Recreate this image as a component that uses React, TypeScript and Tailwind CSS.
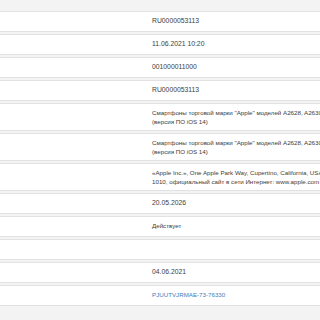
import React from "react";

type Row = { lines: string[]; link?: boolean; num?: boolean };

const rows: Row[] = [
  { lines: ["RU0000053113"], num: true },
  { lines: ["11.06.2021 10:20"], num: true },
  { lines: ["001000011000"], num: true },
  { lines: ["RU0000053113"], num: true },
  { lines: ["Смартфоны торговой марки \"Apple\" моделей A2628, A2630, A2631, A2633, A2634, A2635", "(версия ПО iOS 14)"] },
  { lines: ["Смартфоны торговой марки \"Apple\" моделей A2628, A2630, A2631, A2633, A2634, A2635", "(версия ПО iOS 14)"] },
  { lines: ["«Apple Inc.», One Apple Park Way, Cupertino, California, USA, 95014,", "1010, официальный сайт в сети Интернет: www.apple.com"] },
  { lines: ["20.05.2026"], num: true },
  { lines: ["Действует"] },
  { lines: [""] },
  { lines: ["04.06.2021"], num: true },
  { lines: ["PJUUTVJRMAE-73-76330"], link: true },
];

export default function App() {
  return (
    <div
      className="w-[320px] h-[320px] overflow-hidden bg-[#f3f3f3] pt-[11px]"
      style={{ fontFamily: '"Liberation Sans", Arial, sans-serif' }}
    >
      {rows.map((r, i) => (
        <div
          key={i}
          className={`flex bg-white border-y border-[#e2e2e2] mb-[2px] ${r.lines.length > 1 ? "h-[28px] pt-[2px]" : "h-[21px]"}`}
        >
          <div className="w-[152px] shrink-0" />
          <div
            className={`flex flex-col justify-center whitespace-nowrap leading-[8.6px] ${r.num ? "text-[6.8px]" : "text-[6.2px]"}`}
          >
            {r.lines.map((l, j) => (
              <div key={j} className={r.link ? "text-[#3f7cb8]" : "text-[#3c3c3c]"}>
                {l}
              </div>
            ))}
          </div>
        </div>
      ))}
    </div>
  );
}
